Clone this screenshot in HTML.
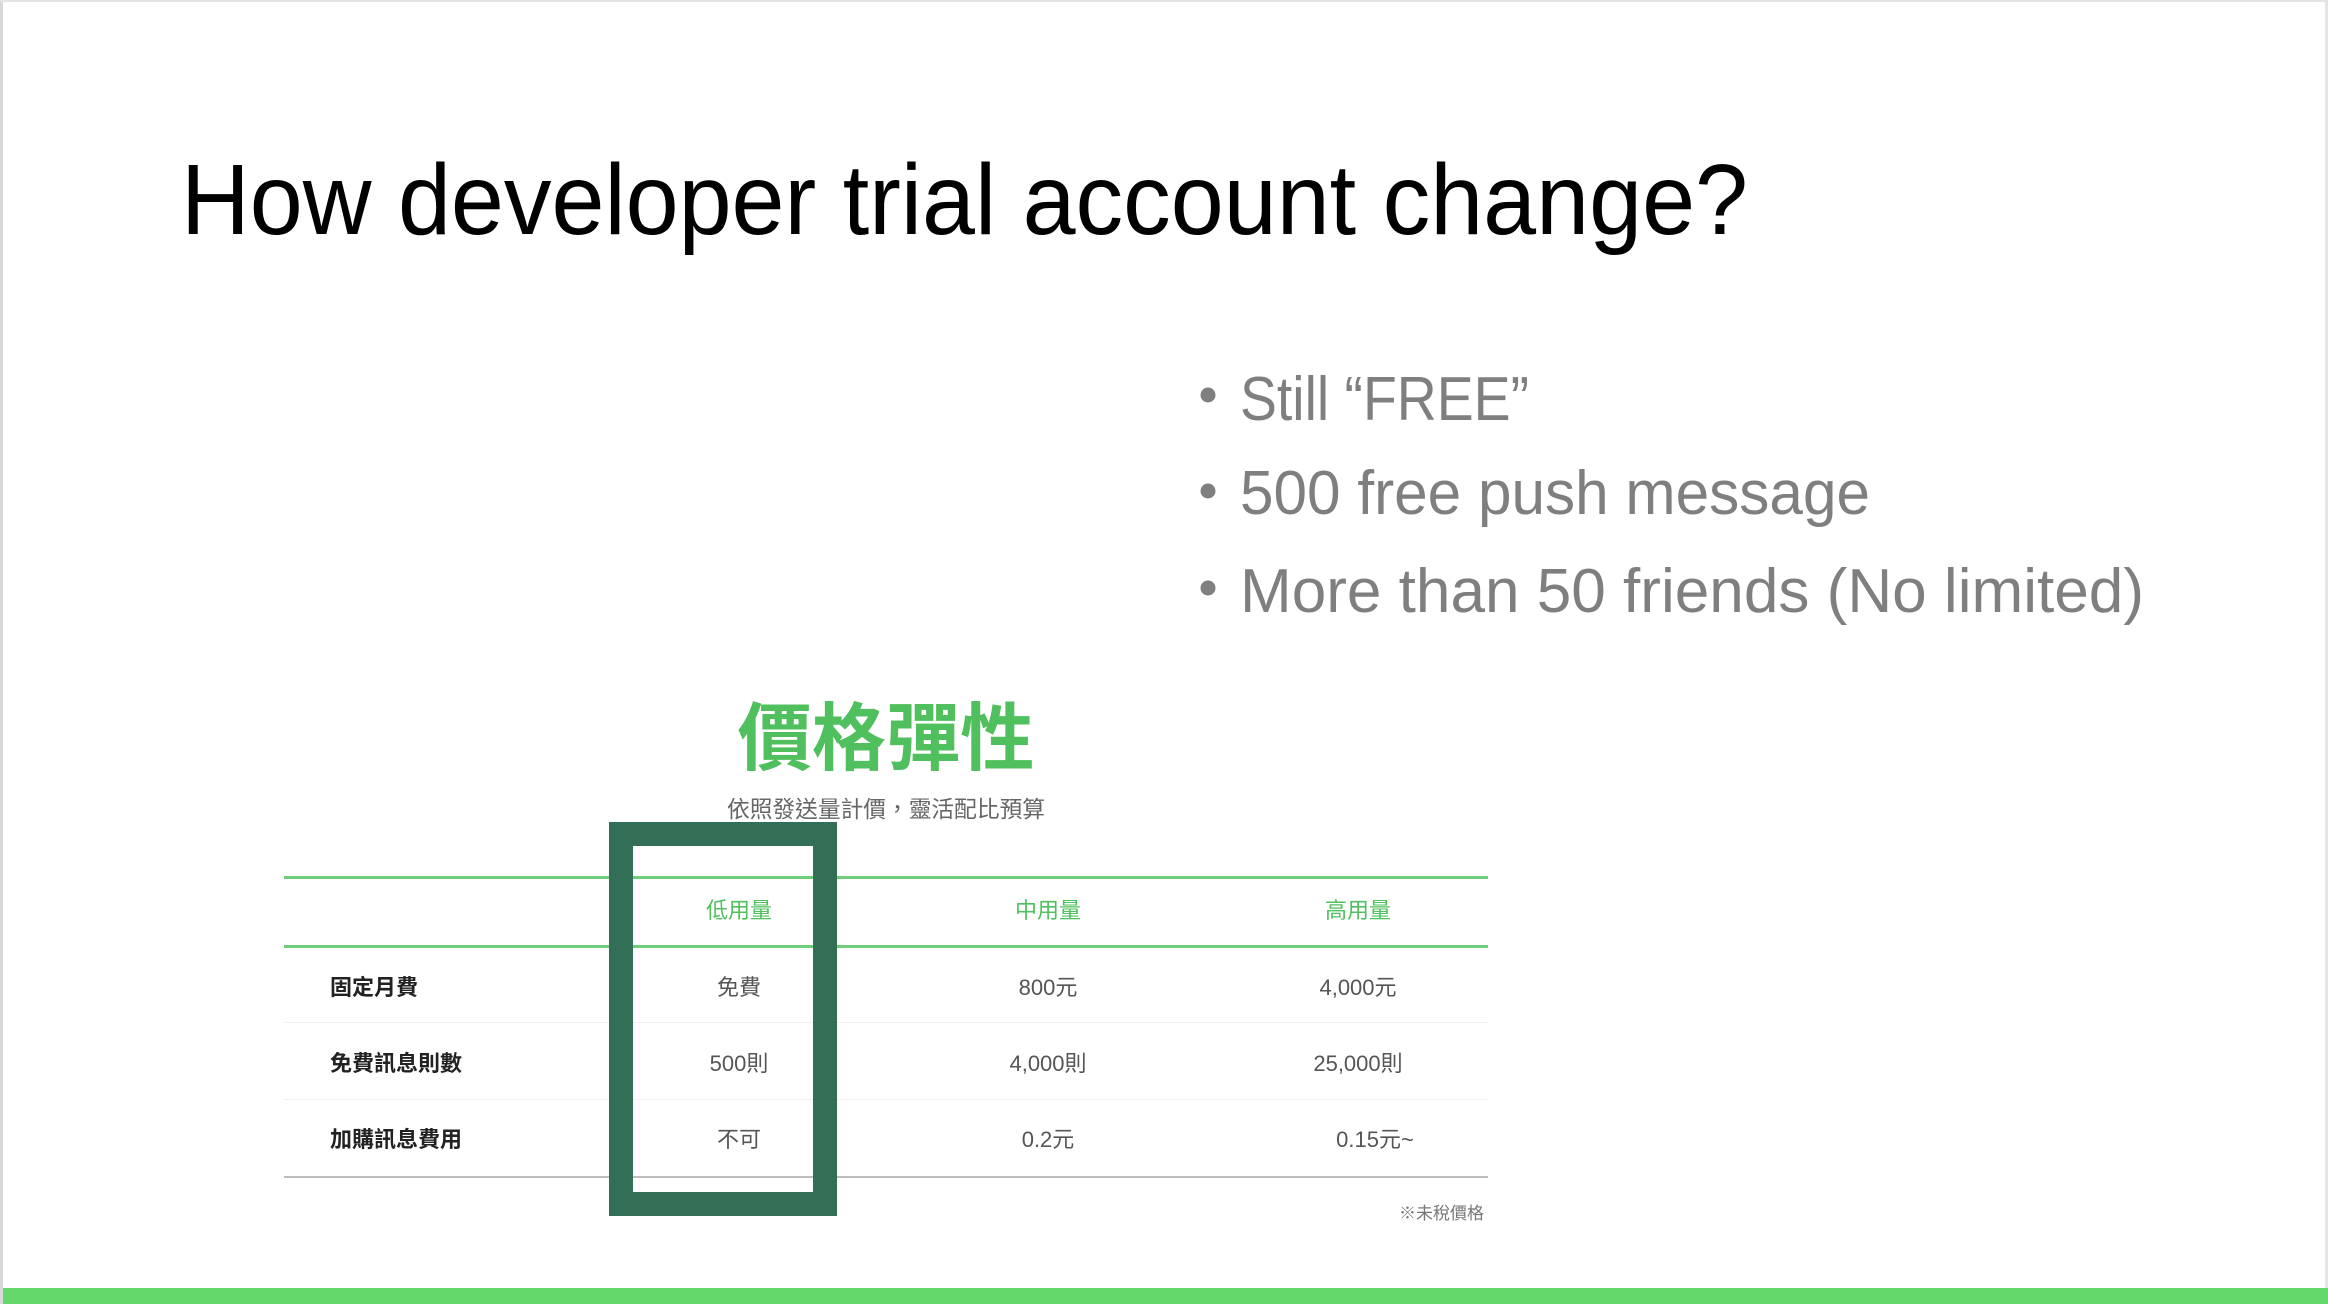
<!DOCTYPE html>
<html><head><meta charset="utf-8"><style>
html,body{margin:0;padding:0;background:#fff;}
body{width:2328px;height:1304px;overflow:hidden;position:relative;}
svg{position:absolute;left:0;top:0;}
</style></head><body>
<svg width="2328" height="1304" viewBox="0 0 2328 1304" xmlns="http://www.w3.org/2000/svg">
<rect x="0" y="0" width="2328" height="1304" fill="#fff"/>
<rect x="0" y="0" width="3" height="1304" fill="#d8d8d8"/>
<rect x="0" y="0" width="2328" height="2" fill="#e4e4e4"/>
<rect x="2325" y="0" width="3" height="1304" fill="#e4e4e4"/>
<rect x="3" y="1288" width="2325" height="16" fill="#65d86b"/>

<text x="181" y="234" font-family="Liberation Sans, sans-serif" font-size="100" fill="#000" textLength="1567" lengthAdjust="spacingAndGlyphs">How developer trial account change?</text>

<g font-family="Liberation Sans, sans-serif" font-size="62" fill="#7f7f7f">
<circle cx="1208" cy="395" r="7.5"/>
<text x="1240" y="420" textLength="289" lengthAdjust="spacingAndGlyphs">Still “FREE”</text>
<circle cx="1208" cy="491" r="7.5"/>
<text x="1240" y="514" textLength="630" lengthAdjust="spacingAndGlyphs">500 free push message</text>
<circle cx="1208" cy="588" r="7.5"/>
<text x="1240" y="612" textLength="904" lengthAdjust="spacingAndGlyphs">More than 50 friends (No limited)</text>
</g>

<text x="886" y="764" text-anchor="middle" font-family="Noto Sans CJK TC, sans-serif" font-weight="bold" font-size="74" fill="#50c05e" textLength="297" lengthAdjust="spacingAndGlyphs">價格彈性</text>
<text x="886" y="817" text-anchor="middle" font-family="Noto Sans CJK TC, sans-serif" font-size="23" fill="#666" textLength="318" lengthAdjust="spacingAndGlyphs">依照發送量計價，靈活配比預算</text>

<rect x="284" y="876" width="1204" height="3" fill="#6fcf78"/>
<rect x="284" y="945" width="1204" height="3" fill="#6fcf78"/>
<rect x="284" y="1022" width="1204" height="1" fill="#f0f0f0"/>
<rect x="284" y="1099" width="1204" height="1" fill="#f0f0f0"/>
<rect x="284" y="1176" width="1204" height="2" fill="#bdbdbd"/>

<g font-family="Noto Sans CJK TC, sans-serif" font-size="22" text-anchor="middle" fill="#50c05e">
<text x="739" y="918">低用量</text>
<text x="1048" y="918">中用量</text>
<text x="1358" y="918">高用量</text>
</g>
<g font-family="Noto Sans CJK TC, sans-serif" font-size="22" font-weight="bold" fill="#222">
<text x="330" y="995">固定月費</text>
<text x="330" y="1071">免費訊息則數</text>
<text x="330" y="1147">加購訊息費用</text>
</g>
<g font-family="Liberation Sans, Noto Sans CJK TC, sans-serif" font-size="22" text-anchor="middle" fill="#555">
<text x="739" y="995">免費</text>
<text x="1048" y="995">800元</text>
<text x="1358" y="995">4,000元</text>
<text x="739" y="1071">500則</text>
<text x="1048" y="1071">4,000則</text>
<text x="1358" y="1071">25,000則</text>
<text x="739" y="1147">不可</text>
<text x="1048" y="1147">0.2元</text>
<text x="1375" y="1147">0.15元~</text>
</g>
<text x="1484" y="1219" text-anchor="end" font-family="Noto Sans CJK TC, sans-serif" font-size="17" fill="#777">※未稅價格</text>

<rect x="621" y="834" width="204" height="370" fill="none" stroke="#336e57" stroke-width="24"/>
</svg>
</body></html>
